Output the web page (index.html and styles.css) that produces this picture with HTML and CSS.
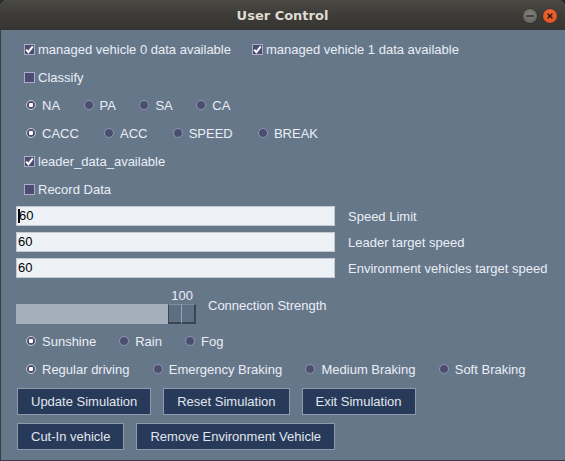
FILE: index.html
```html
<!DOCTYPE html>
<html>
<head>
<meta charset="utf-8">
<link rel="stylesheet" href="styles.css">
</head>
<body>
<div class="window">
  <div class="titlebar">
    <div></div>
    <div class="title">User Control</div>
    <div class="controls">
      <span class="wbtn min"><svg width="14" height="14" viewBox="0 0 14 14"><path d="M3.5 7 H10.5" stroke="#2f2f2d" stroke-width="1.6"/></svg></span>
      <span class="wbtn close"><svg width="14" height="14" viewBox="0 0 14 14"><path d="M4.6 4.6 L9.4 9.4 M9.4 4.6 L4.6 9.4" stroke="#3a1a0c" stroke-width="1.5"/></svg></span>
    </div>
  </div>
  <div class="content">
    <div class="row gap-chk">
      <label class="chk"><span class="box"><svg width="11" height="11" viewBox="0 0 11 11"><path d="M2.2 5.6 L4.4 8.2 L8.8 2.4" fill="none" stroke="#fff" stroke-width="2"/></svg></span>managed vehicle 0 data available</label>
      <label class="chk"><span class="box"><svg width="11" height="11" viewBox="0 0 11 11"><path d="M2.2 5.6 L4.4 8.2 L8.8 2.4" fill="none" stroke="#fff" stroke-width="2"/></svg></span>managed vehicle 1 data available</label>
    </div>
    <div class="row">
      <label class="chk"><span class="box"></span>Classify</label>
    </div>
    <div class="row gap-r1">
      <label class="rad on"><span class="dot"></span>NA</label>
      <label class="rad"><span class="dot"></span>PA</label>
      <label class="rad"><span class="dot"></span>SA</label>
      <label class="rad"><span class="dot"></span>CA</label>
    </div>
    <div class="row gap-r2">
      <label class="rad on"><span class="dot"></span>CACC</label>
      <label class="rad"><span class="dot"></span>ACC</label>
      <label class="rad"><span class="dot"></span>SPEED</label>
      <label class="rad"><span class="dot"></span>BREAK</label>
    </div>
    <div class="row">
      <label class="chk"><span class="box"><svg width="11" height="11" viewBox="0 0 11 11"><path d="M2.2 5.6 L4.4 8.2 L8.8 2.4" fill="none" stroke="#fff" stroke-width="2"/></svg></span>leader_data_available</label>
    </div>
    <div class="row">
      <label class="chk"><span class="box"></span>Record Data</label>
    </div>

    <div class="fields">
      <div class="field-row"><div class="field"><span class="caret"></span>60</div><span class="field-label">Speed Limit</span></div>
      <div class="field-row"><div class="field">60</div><span class="field-label">Leader target speed</span></div>
      <div class="field-row"><div class="field">60</div><span class="field-label">Environment vehicles target speed</span></div>
    </div>

    <div class="slider-row">
      <div class="slider">
        <div class="slider-value">100</div>
        <div class="track"><div class="handle"><span class="half"></span><span class="half"></span></div></div>
      </div>
      <span class="slider-label">Connection Strength</span>
    </div>

    <div class="row gap-w weather">
      <label class="rad on"><span class="dot"></span>Sunshine</label>
      <label class="rad"><span class="dot"></span>Rain</label>
      <label class="rad"><span class="dot"></span>Fog</label>
    </div>
    <div class="row gap-d">
      <label class="rad on"><span class="dot"></span>Regular driving</label>
      <label class="rad"><span class="dot"></span>Emergency Braking</label>
      <label class="rad"><span class="dot"></span>Medium Braking</label>
      <label class="rad"><span class="dot"></span>Soft Braking</label>
    </div>

    <div class="buttons">
      <div class="btn-row">
        <button class="btn">Update Simulation</button>
        <button class="btn">Reset Simulation</button>
        <button class="btn">Exit Simulation</button>
      </div>
      <div class="btn-row">
        <button class="btn">Cut-In vehicle</button>
        <button class="btn">Remove Environment Vehicle</button>
      </div>
    </div>
  </div>
</div>
</body>
</html>
```

FILE: styles.css
```css
html, body {
  margin: 0;
  padding: 0;
  background: #2b2b29;
}
body {
  font-family: "Liberation Sans", Arial, sans-serif;
  font-size: 13px;
  color: #e9eef5;
}
.window {
  width: 565px;
  height: 461px;
  background: #67778a;
  border-radius: 7px 7px 0 0;
  overflow: hidden;
  box-shadow: inset 1px -1px 0 #3a3d40;
}
.titlebar {
  height: 30px;
  background: linear-gradient(#4a4843, #3b3a36 60%, #363531);
  display: grid;
  grid-template-columns: 1fr auto 1fr;
  align-items: center;
}
.title {
  font-family: "DejaVu Sans", sans-serif;
  font-weight: bold;
  font-size: 13px;
  color: #dfdbd2;
  padding-top: 1px;
}
.controls {
  justify-self: end;
  display: flex;
  gap: 6px;
  padding-right: 8px;
  padding-top: 2px;
}
.wbtn {
  width: 14px;
  height: 14px;
  border-radius: 50%;
  display: block;
}
.wbtn svg { display: block; }
.min {
  background: radial-gradient(circle at 50% 35%, #807f7a, #5e5d58);
  box-shadow: 0 0 0 0.5px #2e2d2a;
}
.close {
  background: radial-gradient(circle at 50% 35%, #f26a36, #df4a16);
  box-shadow: 0 0 0 0.5px #2e2d2a;
}
.content {
  padding-top: 5px;
}
.row {
  display: flex;
  align-items: center;
  height: 28px;
  padding-left: 24px;
}
label {
  display: flex;
  align-items: center;
  line-height: 15px;
  white-space: nowrap;
}
.chk .box {
  width: 11px;
  height: 11px;
  box-sizing: border-box;
  border: 1px solid #a9aec6;
  background: #4b4d72;
  margin-right: 3px;
  display: block;
}
.chk .box svg {
  display: block;
  margin: -1px;
}
.gap-chk { gap: 21px; }
.rad .dot {
  width: 10px;
  height: 10px;
  box-sizing: border-box;
  border-radius: 50%;
  border: 1px solid #8f95b2;
  background: #4c4e6f;
  margin-left: 2px;
  margin-right: 6px;
  display: block;
}
.rad.on .dot {
  border-color: #c6cadb;
  background: radial-gradient(circle, #ffffff 0 2px, #4c4e6f 2.5px);
}
.gap-r1 { gap: 21.5px; }
.gap-r2 { gap: 23.2px; }
.gap-w { gap: 21px; }
.gap-d { gap: 21.3px; }
.weather { margin-top: 3px; }

.fields {
  margin-top: 3px;
  padding-left: 16px;
  display: flex;
  flex-direction: column;
  gap: 6px;
}
.field-row {
  display: flex;
  align-items: center;
}
.field {
  width: 319px;
  height: 20px;
  box-sizing: border-box;
  border: 1px solid #c3c9d1;
  background: #eef2f7;
  color: #000;
  padding-left: 1px;
  line-height: 18px;
  display: flex;
  align-items: center;
}
.caret {
  width: 2px;
  height: 14px;
  background: #000;
  margin-right: -1px;
  display: block;
}
.field-label {
  margin-left: 13px;
}
.slider-row {
  margin-top: 9px;
  padding-left: 16px;
  display: flex;
  align-items: center;
}
.slider {
  width: 180px;
}
.slider-value {
  height: 17px;
  line-height: 17px;
  text-align: right;
  padding-right: 3px;
}
.track {
  height: 20px;
  background: #a4afbb;
  display: flex;
  justify-content: flex-end;
}
.handle {
  width: 28px;
  display: flex;
}
.half {
  flex: 1;
  box-sizing: border-box;
  background: #5f6f83;
  border-left: 1px solid #3c4756;
  border-top: 1px solid #7d8b9b;
  border-bottom: 2px solid #3a4553;
}
.half + .half {
  border-left: 1px solid #9aa6b4;
  border-right: 2px solid #3a4553;
}
.slider-label {
  margin-left: 12px;
}
.buttons {
  margin-top: 5px;
  padding-left: 17px;
  display: flex;
  flex-direction: column;
  gap: 8px;
}
.btn-row {
  display: flex;
  gap: 12px;
}
.btn {
  font-family: "Liberation Sans", Arial, sans-serif;
  font-size: 13px;
  color: #e1e7ef;
  background: #283a5a;
  border: 1px solid #8e9aab;
  border-radius: 0;
  height: 27px;
  padding: 0 13px;
  margin: 0;
  white-space: nowrap;
}
```
